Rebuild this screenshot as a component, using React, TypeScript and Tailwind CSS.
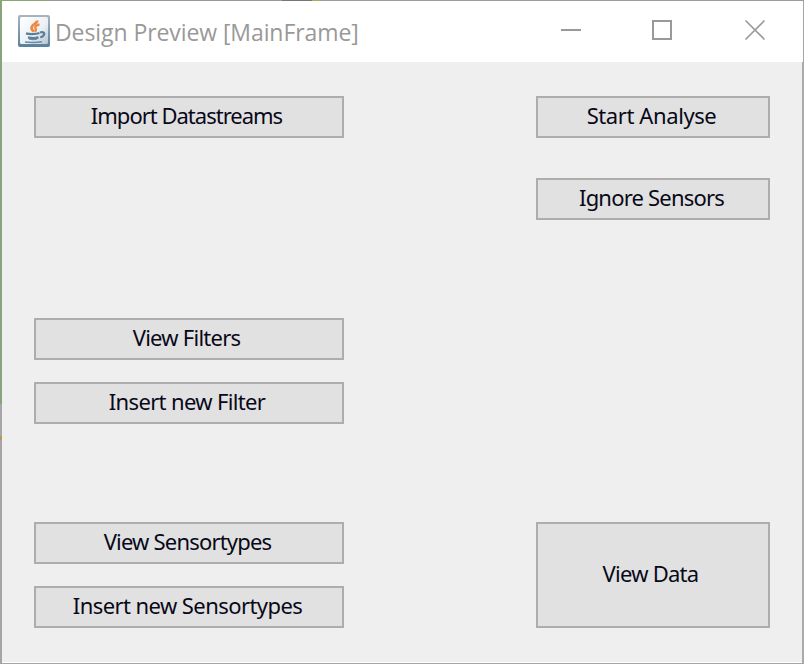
import React from "react";

const font = "font-['Noto_Sans',sans-serif]";

function FrameButton({ label, className = "", textClass = "" }: { label: string; className?: string; textClass?: string }) {
  return (
    <button
      className={`flex shrink-0 items-center justify-center border-2 border-[#adadad] bg-[#e1e1e1] pb-1 text-[22px] leading-none text-[#080818] ${font} ${className}`}
    >
      <span className={`whitespace-nowrap ${textClass}`}>{label}</span>
    </button>
  );
}

function JavaIcon() {
  return (
    <svg width="32" height="32" viewBox="0 0 32 32" fill="none">
      <defs>
        <linearGradient id="tile" x1="0" y1="0" x2="0" y2="1">
          <stop offset="0" stopColor="#a9b6bf" />
          <stop offset="1" stopColor="#58809c" />
        </linearGradient>
        <linearGradient id="face" x1="0" y1="0" x2="1" y2="1">
          <stop offset="0" stopColor="#ffffff" />
          <stop offset="0.6" stopColor="#eaf0f4" />
          <stop offset="1" stopColor="#b3c4d0" />
        </linearGradient>
      </defs>
      <rect width="32" height="32" rx="2" fill="url(#tile)" />
      <rect x="2" y="2" width="28" height="27" rx="1.5" fill="url(#face)" />
      <path d="M19 5.500c.8 3-5.800 4.300-5.500 7.700.1 1.700 1.500 2.300 2.200 3.500" stroke="#ee8a45" strokeWidth="2.800" />
      <path d="M21.500 9.500c-3.200.7-5 2.200-4 3.800.8 1.300.6 2.200-.8 3.400" stroke="#ee8a45" strokeWidth="2.400" />
      <path d="M8 18.300c3 1.100 10 1 13.500-.3M10 22.300c3 1 7.500 1 10.500 0" stroke="#587e9b" strokeWidth="2.300" />
      <path d="M11 24c2.500.5 6 .5 8 0M7 27c5 .6 12 .5 17-.2" stroke="#698ba5" strokeWidth="1.600" />
      <path d="M22 17.500c5-1.700 6 2.700.3 5" stroke="#587e9b" strokeWidth="2.300" />
    </svg>
  );
}

export default function App() {
  return (
    <div className="flex h-[664px] w-[804px] flex-col overflow-hidden bg-[#efefef]">
      <div className="flex h-px shrink-0">
        <div className="w-[45px] bg-[#86a877]" />
        <div className="w-[237px] bg-[#999999]" />
        <div className="w-[30px] bg-[#777777]" />
        <div className="w-[8px] bg-[#a9ad56]" />
        <div className="flex-1 bg-[#9c9c9c]" />
      </div>
      <div className="flex h-[662px] shrink-0">
        <div className="flex w-[2px] shrink-0 flex-col">
          <div className="h-[403px] bg-[#87a579]" />
          <div className="h-[32px] bg-[#a5a5aa]" />
          <div className="h-[4px] bg-[#b59a60]" />
          <div className="flex-1 bg-[#a5a5a5]" />
        </div>
        <div className="flex w-[800px] flex-col">
          <header className="flex h-[61px] shrink-0 items-start bg-white pl-4">
            <div className="mt-[14px]"><JavaIcon /></div>
            <div className="ml-[5px] mt-[15px] h-8 w-[305px] whitespace-nowrap font-['Open_Sans',sans-serif] text-[23px] leading-8 tracking-[-0.08px] text-[#999999]">
              Design Preview [MainFrame]
            </div>
            <svg className="ml-[198px] mt-[18px]" width="208" height="24" viewBox="0 0 208 24" fill="none" stroke="#999999" strokeWidth="2">
              <path d="M3 11h20M95 2h18v18H95z" />
              <path d="M187.500 1.500l19 19M206.500 1.500l-19 19" strokeWidth="1.600" />
            </svg>
          </header>
          <main className="flex flex-1 justify-between bg-[#efefef] pl-8 pr-8 pt-[34px]">
            <div className="flex w-[310px] flex-col">
              <FrameButton label="Import Datastreams" className="h-[42px]" textClass="mr-[5px] tracking-[-1px]" />
              <FrameButton label="View Filters" className="mt-[180px] h-[42px]" textClass="mr-[5px] tracking-[-0.75px]" />
              <FrameButton label="Insert new Filter" className="mt-[22px] h-[42px]" textClass="mr-1 tracking-[-0.65px]" />
              <FrameButton label="View Sensortypes" className="mt-[98px] h-[42px]" textClass="mr-[3px] tracking-[-0.8px]" />
              <FrameButton label="Insert new Sensortypes" className="mt-[22px] h-[42px]" textClass="mr-[3px] tracking-[-0.57px]" />
            </div>
            <div className="flex w-[234px] flex-col">
              <FrameButton label="Start Analyse" className="h-[42px]" textClass="mr-[3px] tracking-[-0.4px]" />
              <FrameButton label="Ignore Sensors" className="mt-10 h-[42px]" textClass="mr-[3px] tracking-[-0.8px]" />
              <FrameButton label="View Data" className="mt-[302px] h-[106px]" textClass="mr-[5px] tracking-[-0.75px]" />
            </div>
          </main>
          <div className="h-px shrink-0 bg-white" />
        </div>
        <div className="flex w-[2px] flex-col">
          <div className="h-[61px] border-r border-[#a5a5a5] bg-white" />
          <div className="flex-1 bg-[#aaaaaa]" />
        </div>
      </div>
      <div className="h-px shrink-0 bg-[#a5a5a5]" />
    </div>
  );
}
